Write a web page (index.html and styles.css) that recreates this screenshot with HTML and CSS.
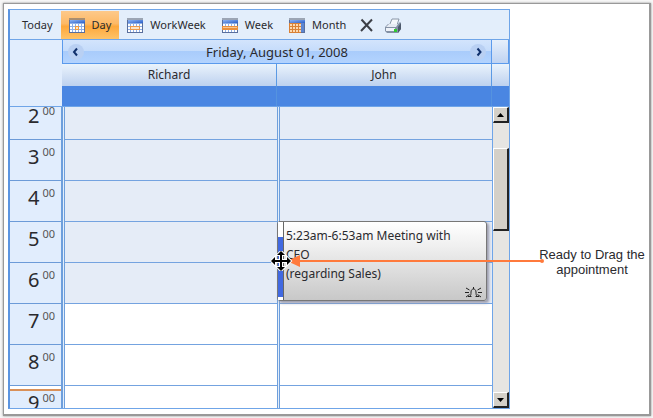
FILE: index.html
```html
<!DOCTYPE html>
<html lang="en">
<head>
<meta charset="utf-8">
<title>Schedule</title>
<link rel="stylesheet" href="styles.css">
</head>
<body>
<svg class="defs" aria-hidden="true">
  <defs>
    <linearGradient id="blue" x1="0" y1="0" x2="1" y2="1"><stop offset="0" stop-color="#8db4f4"/><stop offset="1" stop-color="#2b5fc8"/></linearGradient>
    <symbol id="cal" viewBox="0 0 16 15">
      <path d="M0 2h16v13H0z" fill="#5a6f9c"/>
      <path d="M1 2h15v3H1z" fill="url(#blue)"/>
      <path d="M1 5h14v9H1z" fill="#8fb0e8"/>
      <path d="M.5 1h15" stroke="#555d6c" stroke-width="2" stroke-dasharray="1 1"/>
    </symbol>
    <symbol id="cells" viewBox="0 0 16 15">
      <path d="M1 6h2v2H1zM4 6h2v2H4zM7 6h2v2H7zM10 6h2v2h-2zM13 6h2v2h-2zM1 9h2v2H1zM4 9h2v2H4zM7 9h2v2H7zM10 9h2v2h-2zM13 9h2v2h-2zM1 12h2v2H1zM4 12h2v2H4zM7 12h2v2H7zM10 12h2v2h-2zM13 12h2v2h-2z"/>
    </symbol>
  </defs>
</svg>
<main class="frame">
  <section class="scheduler">
    <nav class="toolbar">
      <button class="tool" type="button">Today</button>
      <button class="tool active" type="button"><svg class="icon" viewBox="0 0 16 15"><use href="#cal"/><use href="#cells" fill="#fff"/><path d="M6 8h4v4H6z" fill="#f39a3c"/><path d="M7 9h2v2H7z" fill="#fde6c8"/></svg>Day</button>
      <button class="tool" type="button"><svg class="icon" viewBox="0 0 16 15"><use href="#cal"/><use href="#cells" fill="#fff"/><path d="M3 8h10v4H3z" fill="#ee9a4c"/><path d="M4 9h8v2H4z" fill="#fde6c8"/></svg>WorkWeek</button>
      <button class="tool" type="button"><svg class="icon" viewBox="0 0 16 15"><use href="#cal"/><use href="#cells" fill="#fff"/><path d="M0 8h16v4H0z" fill="#ea8f3c"/><path d="M1 9h14v1H1z" fill="#fbc58c"/></svg>Week</button>
      <button class="tool" type="button"><svg class="icon" viewBox="0 0 16 15"><use href="#cal"/><path d="M0 5h12v10H0z" fill="#d98136"/><use href="#cells" fill="#fbd9b0"/><path d="M12 5h3v9h-3z" fill="#5d86d2"/></svg>Month</button>
      <button class="tool glyph" type="button" aria-label="Delete"><svg class="small" viewBox="0 0 13 14"><path d="M1.500 1.500L12 13M12 1.500L1 13" stroke="#3c3f46" stroke-width="2" fill="none"/></svg></button>
      <button class="tool glyph" type="button" aria-label="Print"><svg class="icon" viewBox="0 0 16 15"><path d="M4.500 7L7 1h7l-2 6z" fill="#f4f7fb" stroke="#8a97a8"/><path d="M0 9l3-3h10l2-2 1 1v6l-3 4H2l-2-2z" fill="#8491a5"/><path d="M1 9l3-3h9l-2 3z" fill="#e6ebf3"/><path d="M1 10h9v3H1z" fill="#eef2f8"/><path d="M13 9l3-4v6l-3 4z" fill="#4d596b"/><path d="M9 11h3v3H9z" fill="#31c931"/></svg></button>
    </nav>
    <header class="head">
      <div class="datebar">
        <button class="step" type="button" aria-label="Previous day"><svg viewBox="0 0 16 16"><path d="M9 4.500L6 8l3 3.500" fill="none" stroke="#11306b" stroke-width="2"/></svg></button>
        <span>Friday, August 01, 2008</span>
        <button class="step" type="button" aria-label="Next day"><svg viewBox="0 0 16 16"><path d="M7.500 4.500L10.500 8l-3 3.500" fill="none" stroke="#11306b" stroke-width="2"/></svg></button>
      </div>
      <div class="corner"></div>
      <div class="person">Richard</div>
      <div class="person">John</div>
      <div class="person"></div>
      <div class="allday"></div>
      <div class="allday"></div>
      <div class="allday"></div>
    </header>
    <div class="body">
      <div class="view">
        <div class="hours">
          <div class="hour">2<sup>00</sup></div>
          <div class="hour">3<sup>00</sup></div>
          <div class="hour">4<sup>00</sup></div>
          <div class="hour">5<sup>00</sup></div>
          <div class="hour">6<sup>00</sup></div>
          <div class="hour">7<sup>00</sup></div>
          <div class="hour">8<sup>00</sup></div>
          <div class="hour now">9<sup>00</sup></div>
        </div>
        <div class="day">
          <div class="slot off"></div><div class="slot off"></div><div class="slot off"></div><div class="slot off"></div><div class="slot off"></div><div class="slot"></div><div class="slot"></div><div class="slot"></div>
        </div>
        <div class="day">
          <div class="slot off"></div><div class="slot off"></div><div class="slot off"></div><div class="slot off"></div><div class="slot off"></div><div class="slot"></div><div class="slot"></div><div class="slot"></div>
          <article class="event">
            <div class="busy"></div>
            <p>5:23am-6:53am Meeting with<br>CEO<br>(regarding Sales)</p>
            <svg class="bell" viewBox="0 0 17 12"><path d="M3 10.500h3.500M10.500 10.500H14M5 10c1-1 1-2 1-4 0-4 5-4 5 0 0 2 0 3 1 4M8.500 1v2M4.500 4L1 2M4 6.500H0M4.500 8.500L1 11M12.500 4L16 2M13 6.500h4M12.500 8.500L16 11" fill="none" stroke="#222"/></svg>
          </article>
        </div>
      </div>
      <div class="scroll">
        <button class="arrow" type="button" aria-label="Scroll up"><svg viewBox="0 0 7 4"><path d="M0 4h7L3.500 0z"/></svg></button>
        <div class="thumb"></div>
        <button class="arrow" type="button" aria-label="Scroll down"><svg viewBox="0 0 7 4"><path d="M0 0h7L3.500 4z"/></svg></button>
      </div>
    </div>
  </section>
  <aside class="note">Ready to Drag the appointment</aside>
  <svg class="pointer" viewBox="0 0 274 20"><path d="M24 10h247" stroke="#ff7a3c" stroke-width="2"/><circle cx="271" cy="10" r="2" fill="#ff7a3c"/><path d="M16 10l13-6v12z" fill="#ff7a3c"/><path d="M10 0l4 4h-3v5h5V6l4 4-4 4v-3h-5v5h3l-4 4-4-4h3v-5H4v3l-4-4 4-4v3h5V4H6z" fill="#000" stroke="#fff" stroke-width="2" paint-order="stroke"/></svg>
</main>
</body>
</html>
```
FILE: styles.css
```css
* { box-sizing: border-box; }
body {
  margin: 0;
  padding: 3px 2px 3px 3px;
  background: #f6f6f6;
  color: #2a2a2e;
  font: 12px/18px "Noto Sans", "Open Sans", sans-serif;
}
button { font: inherit; color: inherit; border: 0; padding: 0; background: none; }
.defs { position: absolute; width: 0; height: 0; }
.frame {
  position: relative;
  display: flex;
  padding: 5px 4px;
  background: #fff;
  border: 1px solid #999;
  border-width: 1px 2px 2px 1px;
  box-shadow: 0 0 2px #888;
}
.scheduler {
  flex: 1;
  min-width: 0;
  border: 1px solid #6fa5e8;
  border-left: 2px solid #5b94e0;
  background: #e3eefb;
}
.toolbar { display: flex; align-items: center; height: 30px; padding-left: 4px; }
.tool { display: flex; align-items: center; gap: 7px; height: 28px; padding: 0 8px; font-size: 11px; }
.active { background: linear-gradient(#fdc98a, #fdb966 45%, #fda83c 55%, #fec368); }
.glyph { padding: 0 6px; }
.icon { width: 16px; height: 15px; }
.small { width: 13px; height: 14px; }
.head {
  display: grid;
  grid-template-columns: 1fr 1fr 17px;
  grid-template-rows: 24px 22px 20px;
  border-left: 52px solid #e1edfd;
  box-shadow: 0 -1px #6fa5e8;
}
.datebar {
  grid-column: span 2;
  display: flex;
  justify-content: space-between;
  align-items: center;
  padding: 0 5px;
  border: 1px solid #5b9aec;
  border-top: 0;
  background: linear-gradient(#d3e4fc, #c5dcfb 48%, #a9ccfb 50%, #b3d3fe);
  font-size: 13px;
}
.step { width: 16px; height: 16px; border-radius: 8px; background: #b9d0f3; }
.step svg { display: block; }
.corner { border: 1px solid #5b9aec; background: linear-gradient(#e6effb, #bfd3f2); border-width: 0 1px 1px 0; }
.person { text-align: center; line-height: 22px; border-right: 1px solid #5b9ae4; background: linear-gradient(#eaf3fc, #bdd1ef); }
.allday { background: #4a86e2; border-right: 1px solid #5593df; }
.person:nth-child(5), .allday:last-child { border-right: 0; }
.body { display: flex; border-top: 1px solid #6fa5e8; }
.view { flex: 1; display: flex; height: 301px; overflow: hidden; }
.hours { width: 52px; margin-top: -8px; background: #e1edfd; border-right: 1px solid #6e9fdc; }
.hour {
  height: 41px;
  padding: 6px 6px 0 0;
  border-bottom: 1px solid #6c9bd8;
  font-size: 20px;
  line-height: 22px;
  text-align: right;
  white-space: nowrap;
}
.hour sup { display: inline-block; margin-left: 3px; font-size: 11px; line-height: 10px; vertical-align: 8px; color: #555; }
.now { background: linear-gradient(#fff 3px, #d99058 3px, #d99058 5px, transparent 5px); }
.day { position: relative; flex: 1; margin-top: -8px; border-left: 3px double #6e9fdc; }
.slot { height: 41px; border-bottom: 1px solid #74a3e0; background: #fff; }
.off { background: #e5ecf7; }
.event {
  position: absolute;
  top: 122px;
  left: -3px;
  right: 5px;
  display: flex;
  height: 80px;
  border: 1px solid #777;
  border-radius: 3px;
  background: linear-gradient(#fff, #f0f0f0 30%, #c8c8c8);
  box-shadow: 2px 2px 3px #99a;
}
.busy { width: 6px; border-right: 1px solid #666; background: linear-gradient(#fff 15px, #4169e1 15px, #4169e1 75px, #fff 75px); }
.event p { margin: 4px 0 0 2px; line-height: 19px; white-space: nowrap; }
.bell { position: absolute; right: 4px; bottom: 2px; width: 17px; height: 12px; }
.scroll { width: 17px; display: flex; flex-direction: column; border-left: 1px solid #6fa5e8; background: #e6e5e2; }
.arrow { height: 16px; background: #d4d0c8; border: 1px solid #fff; border-right: 2px solid #222; border-bottom: 2px solid #222; }
.arrow svg { display: block; width: 7px; height: 4px; margin: 0 auto; }
.thumb { height: 83px; margin: 25px 0 auto; background: #d4d0c8; border: 1px solid #fff; border-right: 2px solid #222; border-bottom: 2px solid #222; }
.note { width: 135px; padding: 238px 0 0 29px; font: 13px/15px "Liberation Sans", sans-serif; text-align: center; }
.pointer { position: absolute; top: 247px; right: 104px; width: 274px; height: 20px; }
```
